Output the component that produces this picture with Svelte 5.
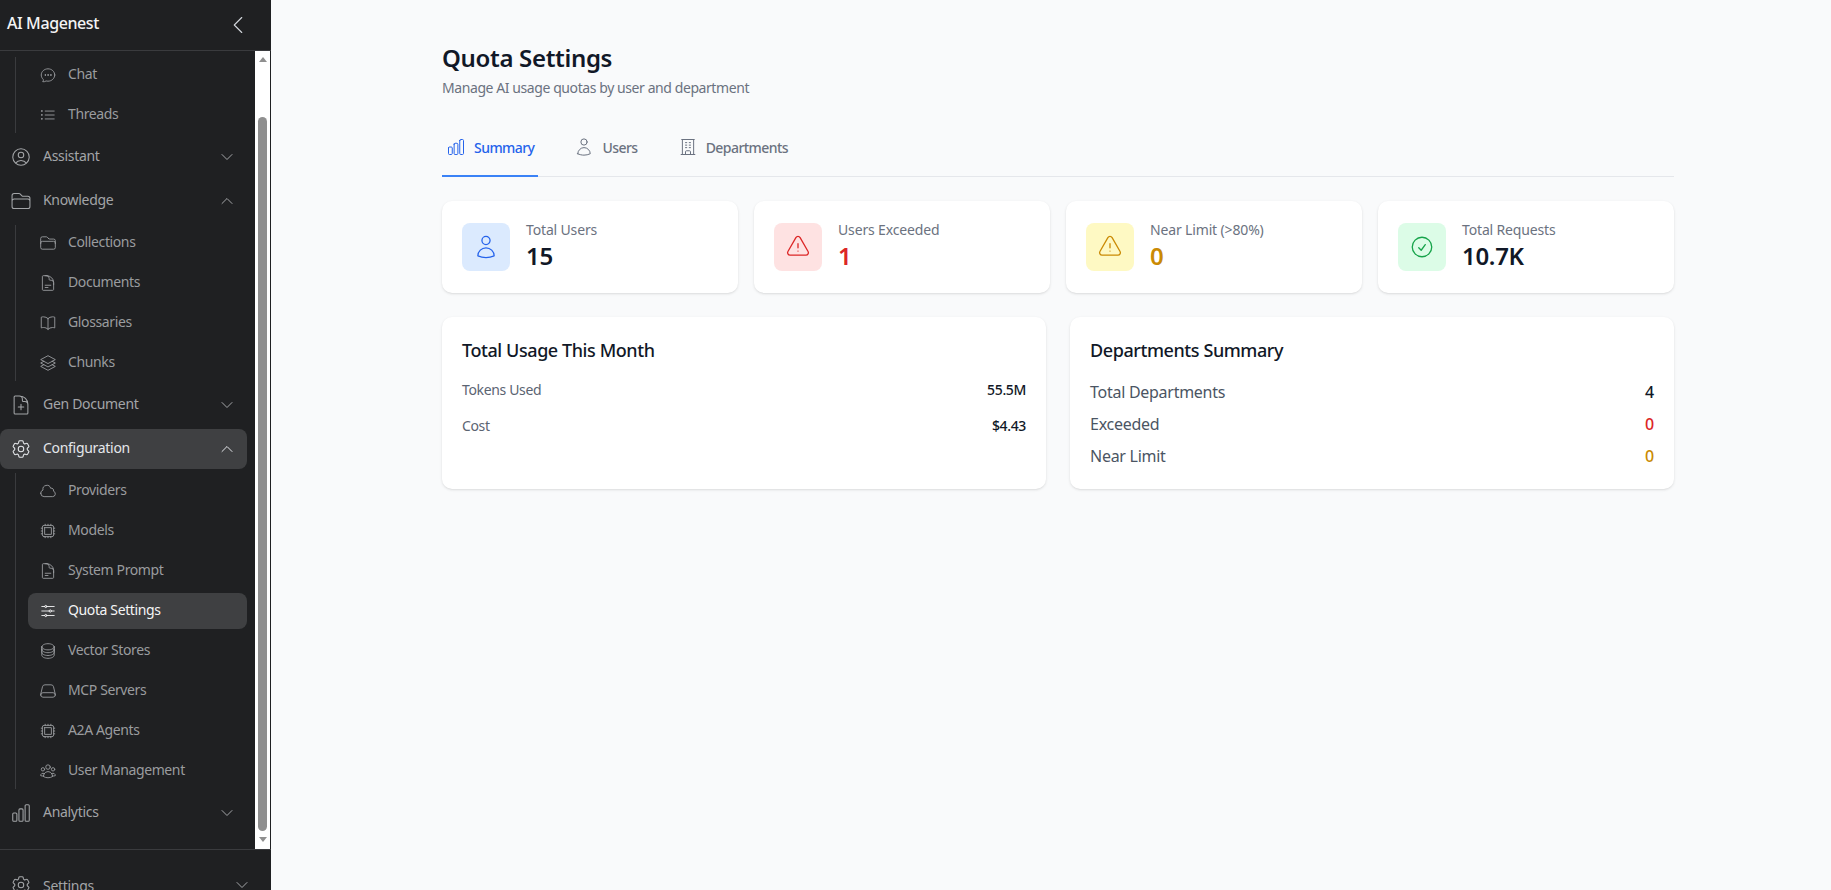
<script>
  const P = {
    chart: 'M3 13.125C3 12.504 3.504 12 4.125 12h2.25c.621 0 1.125.504 1.125 1.125v6.75C7.5 20.496 6.996 21 6.375 21h-2.25A1.125 1.125 0 0 1 3 19.875v-6.75ZM9.75 8.625c0-.621.504-1.125 1.125-1.125h2.25c.621 0 1.125.504 1.125 1.125v11.25c0 .621-.504 1.125-1.125 1.125h-2.25a1.125 1.125 0 0 1-1.125-1.125V8.625ZM16.5 4.125c0-.621.504-1.125 1.125-1.125h2.25C20.496 3 21 3.504 21 4.125v15.75c0 .621-.504 1.125-1.125 1.125h-2.25a1.125 1.125 0 0 1-1.125-1.125V4.125Z',
    user: 'M15.75 6a3.75 3.75 0 1 1-7.5 0 3.75 3.75 0 0 1 7.5 0ZM4.501 20.118a7.5 7.5 0 0 1 14.998 0A17.933 17.933 0 0 1 12 21.75c-2.676 0-5.216-.584-7.499-1.632Z',
    warn: 'M12 9v3.75m-9.303 3.376c-.866 1.5.217 3.374 1.948 3.374h14.71c1.73 0 2.813-1.874 1.948-3.374L13.949 3.378c-.866-1.5-3.032-1.5-3.898 0L2.697 16.126ZM12 15.75h.007v.008H12v-.008Z',
    check: 'M9 12.75 11.25 15 15 9.75M21 12a9 9 0 1 1-18 0 9 9 0 0 1 18 0Z',
    office: 'M3.75 21h16.5M4.5 3h15M5.25 3v18m13.5-18v18M9 6.75h1.5m-1.5 3h1.5m-1.5 3h1.5m3-6H15m-1.5 3H15m-1.5 3H15M9 21v-3.375c0-.621.504-1.125 1.125-1.125h3.75c.621 0 1.125.504 1.125 1.125V21',
    chat: 'M8.625 12a.375.375 0 1 1-.75 0 .375.375 0 0 1 .75 0Zm0 0H8.25m4.125 0a.375.375 0 1 1-.75 0 .375.375 0 0 1 .75 0Zm0 0H12m4.125 0a.375.375 0 1 1-.75 0 .375.375 0 0 1 .75 0Zm0 0h-.375M21 12c0 4.556-4.03 8.25-9 8.25a9.764 9.764 0 0 1-2.555-.337A5.972 5.972 0 0 1 5.41 20.97a5.969 5.969 0 0 1-.474-.065 4.48 4.48 0 0 0 .978-2.025c.09-.457-.133-.901-.467-1.226C3.93 16.178 3 14.189 3 12c0-4.556 4.03-8.25 9-8.25s9 3.694 9 8.25Z',
    list: 'M8.25 6.75h12M8.25 12h12m-12 5.25h12M3.75 6.75h.007v.008H3.75V6.75Zm.375 0a.375.375 0 1 1-.75 0 .375.375 0 0 1 .75 0ZM3.75 12h.007v.008H3.75V12Zm.375 0a.375.375 0 1 1-.75 0 .375.375 0 0 1 .75 0Zm-.375 5.25h.007v.008H3.75v-.008Zm.375 0a.375.375 0 1 1-.75 0 .375.375 0 0 1 .75 0Z',
    ucircle: 'M17.982 18.725A7.488 7.488 0 0 0 12 15.75a7.488 7.488 0 0 0-5.982 2.975m11.963 0a9 9 0 1 0-11.963 0m11.963 0A8.966 8.966 0 0 1 12 21a8.966 8.966 0 0 1-5.982-2.275M15 9.75a3 3 0 1 1-6 0 3 3 0 0 1 6 0Z',
    folder: 'M2.25 12.75V12A2.25 2.25 0 0 1 4.5 9.75h15A2.25 2.25 0 0 1 21.75 12v.75m-8.69-6.44-2.12-2.12a1.5 1.5 0 0 0-1.061-.44H4.5A2.25 2.25 0 0 0 2.25 6v12a2.25 2.25 0 0 0 2.25 2.25h15A2.25 2.25 0 0 0 21.75 18V9a2.25 2.25 0 0 0-2.25-2.25h-5.379a1.5 1.5 0 0 1-1.06-.44Z',
    doc: 'M19.5 14.25v-2.625a3.375 3.375 0 0 0-3.375-3.375h-1.5A1.125 1.125 0 0 1 13.5 7.125v-1.5a3.375 3.375 0 0 0-3.375-3.375H8.25m0 12.75h7.5m-7.5 3H12M10.5 2.25H5.625c-.621 0-1.125.504-1.125 1.125v17.25c0 .621.504 1.125 1.125 1.125h12.75c.621 0 1.125-.504 1.125-1.125V11.25a9 9 0 0 0-9-9Z',
    docplus: 'M19.5 14.25v-2.625a3.375 3.375 0 0 0-3.375-3.375h-1.5A1.125 1.125 0 0 1 13.5 7.125v-1.5a3.375 3.375 0 0 0-3.375-3.375H8.25m3.75 9v6m3-3H9m1.5-12H5.625c-.621 0-1.125.504-1.125 1.125v17.25c0 .621.504 1.125 1.125 1.125h12.75c.621 0 1.125-.504 1.125-1.125V11.25a9 9 0 0 0-9-9Z',
    book: 'M12 6.042A8.967 8.967 0 0 0 6 3.75c-1.052 0-2.062.18-3 .512v14.25A8.987 8.987 0 0 1 6 18c2.305 0 4.408.867 6 2.292m0-14.25a8.966 8.966 0 0 1 6-2.292c1.052 0 2.062.18 3 .512v14.25A8.987 8.987 0 0 0 18 18a8.967 8.967 0 0 0-6 2.292m0-14.25v14.25',
    stack: 'M6.429 9.75 2.25 12l4.179 2.25m0-4.5 5.571 3 5.571-3m-11.142 0L2.25 7.5 12 2.25l9.75 5.25-4.179 2.25m0 0L21.75 12l-4.179 2.25m0 0 4.179 2.25L12 21.75 2.25 16.5l4.179-2.25m11.142 0-5.571 3-5.571-3',
    cog: 'M9.594 3.94c.09-.542.56-.94 1.11-.94h2.593c.55 0 1.02.398 1.11.94l.213 1.281c.063.374.313.686.645.87.074.04.147.083.22.127.325.196.72.257 1.075.124l1.217-.456a1.125 1.125 0 0 1 1.37.49l1.296 2.247a1.125 1.125 0 0 1-.26 1.431l-1.003.827c-.293.241-.438.613-.43.992a7.723 7.723 0 0 1 0 .255c-.008.378.137.75.43.991l1.004.827c.424.35.534.955.26 1.43l-1.298 2.247a1.125 1.125 0 0 1-1.369.491l-1.217-.456c-.355-.133-.75-.072-1.076.124a6.47 6.47 0 0 1-.22.128c-.331.183-.581.495-.644.869l-.213 1.281c-.09.543-.56.94-1.11.94h-2.594c-.55 0-1.019-.398-1.11-.94l-.213-1.281c-.062-.374-.312-.686-.644-.87a6.52 6.52 0 0 1-.22-.127c-.325-.196-.72-.257-1.076-.124l-1.217.456a1.125 1.125 0 0 1-1.369-.49l-1.297-2.247a1.125 1.125 0 0 1 .26-1.431l1.004-.827c.292-.24.437-.613.43-.991a6.932 6.932 0 0 1 0-.255c.007-.38-.138-.751-.43-.992l-1.004-.827a1.125 1.125 0 0 1-.26-1.43l1.297-2.247a1.125 1.125 0 0 1 1.37-.491l1.216.456c.356.133.751.072 1.076-.124.072-.044.146-.086.22-.128.332-.183.582-.495.644-.869l.214-1.28Z M15 12a3 3 0 1 1-6 0 3 3 0 0 1 6 0Z',
    cloud: 'M2.25 15a4.5 4.5 0 0 0 4.5 4.5H18a3.75 3.75 0 0 0 1.332-7.257 3 3 0 0 0-3.758-3.848 5.25 5.25 0 0 0-10.233 2.33A4.502 4.502 0 0 0 2.25 15Z',
    cpu: 'M8.25 3v1.5M4.5 8.25H3m18 0h-1.5M4.5 12H3m18 0h-1.5m-15 3.75H3m18 0h-1.5M8.25 19.5V21M12 3v1.5m0 15V21m3.75-18v1.5m0 15V21m-9-1.5h10.5a2.25 2.25 0 0 0 2.25-2.25V6.75a2.25 2.25 0 0 0-2.25-2.25H6.75A2.25 2.25 0 0 0 4.5 6.75v10.5a2.25 2.25 0 0 0 2.25 2.25Zm.75-12h9v9h-9v-9Z',
    sliders: 'M10.5 6h9.75M10.5 6a1.5 1.5 0 1 1-3 0m3 0a1.5 1.5 0 1 0-3 0M3.75 6H7.5m3 12h9.75m-9.75 0a1.5 1.5 0 0 1-3 0m3 0a1.5 1.5 0 0 0-3 0m-3.75 0H7.5m9-6h3.75m-3.75 0a1.5 1.5 0 0 1-3 0m3 0a1.5 1.5 0 0 0-3 0m-9.75 0h9.75',
    db: 'M20.25 6.375c0 2.278-3.694 4.125-8.25 4.125S3.75 8.653 3.75 6.375m16.5 0c0-2.278-3.694-4.125-8.25-4.125S3.75 4.097 3.75 6.375m16.5 0v11.25c0 2.278-3.694 4.125-8.25 4.125s-8.25-1.847-8.25-4.125V6.375m16.5 0v3.75m-16.5-3.75v3.75m16.5 0v3.75C20.25 16.153 16.556 18 12 18s-8.25-1.847-8.25-4.125v-3.75m16.5 0c0 2.278-3.694 4.125-8.25 4.125s-8.25-1.847-8.25-4.125',
    server: 'M21.75 17.25v-.228a4.5 4.5 0 0 0-.12-1.03l-2.268-9.64a3.375 3.375 0 0 0-3.285-2.602H7.923a3.375 3.375 0 0 0-3.285 2.602l-2.268 9.64a4.5 4.5 0 0 0-.12 1.03v.228m19.5 0a3 3 0 0 1-3 3H5.25a3 3 0 0 1-3-3m19.5 0a3 3 0 0 0-3-3H5.25a3 3 0 0 0-3 3',
    group: 'M18 18.72a9.094 9.094 0 0 0 3.741-.479 3 3 0 0 0-4.682-2.72m.94 3.198.001.031c0 .225-.012.447-.037.666A11.944 11.944 0 0 1 12 21c-2.17 0-4.207-.576-5.963-1.584A6.062 6.062 0 0 1 6 18.719m12 0a5.971 5.971 0 0 0-.941-3.197m0 0A5.995 5.995 0 0 0 12 12.75a5.995 5.995 0 0 0-5.058 2.772m0 0a3 3 0 0 0-4.681 2.72 8.986 8.986 0 0 0 3.74.477m.94-3.197a5.971 5.971 0 0 0-.94 3.197M15 6.75a3 3 0 1 1-6 0 3 3 0 0 1 6 0Zm6 3a2.25 2.25 0 1 1-4.5 0 2.25 2.25 0 0 1 4.5 0Zm-13.5 0a2.25 2.25 0 1 1-4.5 0 2.25 2.25 0 0 1 4.5 0Z',
    down: 'm19.5 8.25-7.5 7.5-7.5-7.5',
    up: 'm4.5 15.75 7.5-7.5 7.5 7.5',
    left: 'M15.75 19.5 8.25 12l7.5-7.5'
  };
  const nav = [
    { sub: [['chat','Chat'],['list','Threads']] },
    { icon:'ucircle', label:'Assistant' },
    { icon:'folder', label:'Knowledge', open:true },
    { sub: [['folder','Collections'],['doc','Documents'],['book','Glossaries'],['stack','Chunks']] },
    { icon:'docplus', label:'Gen Document' },
    { icon:'cog', label:'Configuration', open:true, active:true },
    { sub: [['cloud','Providers'],['cpu','Models'],['doc','System Prompt'],['sliders','Quota Settings',true],['db','Vector Stores'],['server','MCP Servers'],['cpu','A2A Agents'],['group','User Management']] },
    { icon:'chart', label:'Analytics' }
  ];
  const tabs = [['chart','Summary',true],['user','Users'],['office','Departments']];
  const stats = [
    { icon:'user', tone:'blue', label:'Total Users', value:'15' },
    { icon:'warn', tone:'red', label:'Users Exceeded', value:'1' },
    { icon:'warn', tone:'amber', label:'Near Limit (>80%)', value:'0' },
    { icon:'check', tone:'green', label:'Total Requests', value:'10.7K' }
  ];
</script>

{#snippet icon(name, cls)}
  <svg class={cls} viewBox="0 0 24 24" fill="none" stroke="currentColor" stroke-linecap="round" stroke-linejoin="round"><path d={P[name]} /></svg>
{/snippet}

<div class="page">
  <aside class="sidebar">
    <header class="brand">
      <span class="brand-name">AI Magenest</span>
      {@render icon('left', 'ic-collapse')}
    </header>
    <div class="scroller">
      <nav class="nav">
        {#each nav as item}
          {#if item.sub}
            <ul class="sub">
              {#each item.sub as s}
                <li class="sub-item" class:current={s[2]}>
                  {@render icon(s[0], 'ic-sub')}
                  <span class="nav-text">{s[1]}</span>
                </li>
              {/each}
            </ul>
          {:else}
            <div class="top-item" class:active={item.active}>
              {@render icon(item.icon, 'ic-top')}
              <span class="grow nav-text">{item.label}</span>
              {@render icon(item.open ? 'up' : 'down', 'ic-chev')}
            </div>
          {/if}
        {/each}
      </nav>
      <div class="scrollbar">
        <i class="arrow-up"></i>
        <div class="track"><div class="thumb"></div></div>
        <i class="arrow-down"></i>
      </div>
    </div>
    <footer class="foot">
      <div class="top-item foot-item">
        {@render icon('cog', 'ic-top')}
        <span class="grow">Settings</span>
        {@render icon('down', 'ic-chev')}
      </div>
    </footer>
  </aside>

  <main class="main">
    <div class="wrap">
      <h1>Quota Settings</h1>
      <p class="lead">Manage AI usage quotas by user and department</p>

      <div class="tabs">
        {#each tabs as t}
          <div class="tab" class:on={t[2]}>
            {@render icon(t[0], 'ic-tab')}
            <span>{t[1]}</span>
          </div>
        {/each}
      </div>

      <section class="stats">
        {#each stats as s}
          <div class="card stat">
            <div class="badge {s.tone}">{@render icon(s.icon, 'ic-badge')}</div>
            <div class="stat-text">
              <div class="stat-label">{s.label}</div>
              <div class="stat-value tone-{s.tone}">{s.value}</div>
            </div>
          </div>
        {/each}
      </section>

      <section class="panels">
        <div class="card panel">
          <h2>Total Usage This Month</h2>
          <div class="rows small">
            <div class="row"><span>Tokens Used</span><b>55.5M</b></div>
            <div class="row"><span>Cost</span><b>$4.43</b></div>
          </div>
        </div>
        <div class="card panel">
          <h2>Departments Summary</h2>
          <div class="rows big">
            <div class="row"><span>Total Departments</span><b>4</b></div>
            <div class="row"><span>Exceeded</span><b class="tone-red">0</b></div>
            <div class="row"><span>Near Limit</span><b class="tone-amber">0</b></div>
          </div>
        </div>
      </section>
    </div>
  </main>
</div>

<style>
  :global(body) { margin: 0; background: #f9fafb; }
  .page { display: flex; height: 890px; overflow: hidden; font-family: "Noto Sans", "Open Sans", sans-serif; background: #f9fafb; }
  svg { display: block; flex: none; }

  .sidebar { width: 271px; flex: none; display: flex; flex-direction: column; background: #1f2022; color: #a3a5a8; height: 890px; }
  .brand { flex: none; display: flex; align-items: center; justify-content: space-between; padding: 0 21px 5px 7px; height: 45px; border-bottom: 1px solid #3a3b3e; }
  .brand-name { color: #f4f4f5; font-size: 16px; font-weight: 500; letter-spacing: -0.4px; }
  .ic-collapse { width: 24px; height: 24px; stroke-width: 1.1; color: #d1d5db; margin-top: 5px; }

  .scroller { flex: none; height: 798px; display: flex; }
  .nav { width: 255px; padding: 6px 8px 0 0; box-sizing: border-box; display: flex; flex-direction: column; gap: 4px; overflow: hidden; }
  .top-item { height: 40px; flex: none; display: flex; align-items: center; gap: 11px; padding: 0 12px 0 10px; border-radius: 8px; font-size: 14px; letter-spacing: -0.3px; }
  .top-item.active { background: #3f4042; color: #e5e7eb; }
  .grow { flex: 1; }
  .nav-text { padding-bottom: 3px; }
  .ic-top { width: 22px; height: 22px; stroke-width: 1.15; }
  .ic-chev { width: 16px; height: 16px; stroke-width: 1.5; }
  .sub { list-style: none; margin: 0 0 0 15px; padding: 0 0 0 12px; border-left: 1px solid #3a3b3e; display: flex; flex-direction: column; gap: 4px; }
  .sub-item { height: 36px; display: flex; align-items: center; gap: 11px; padding-left: 11px; border-radius: 8px; font-size: 14px; color: #9a9c9f; letter-spacing: -0.38px; }
  .sub-item.current { background: #3f4042; color: #f4f4f5; }
  .ic-sub { width: 18px; height: 18px; stroke-width: 1.2; }

  .scrollbar { width: 15px; flex: none; background: #fff; display: flex; flex-direction: column; align-items: center; }
  .track { flex: 1; width: 100%; display: flex; flex-direction: column; align-items: center; padding: 55px 0 0; box-sizing: border-box; }
  .thumb { width: 9px; height: 714px; border-radius: 5px; background: #8f8f8f; }
  .arrow-up, .arrow-down { width: 0; height: 0; border-left: 4.5px solid transparent; border-right: 4.5px solid transparent; flex: none; }
  .arrow-up { border-bottom: 5px solid #8f8f8f; margin-top: 6px; }
  .arrow-down { border-top: 5px solid #8f8f8f; margin-bottom: 7px; }

  .foot { flex: none; border-top: 1px solid #3a3b3e; padding: 15px 8px 0 0; }
  .foot-item { padding-right: 13px; }

  .main { flex: 1; min-width: 0; }
  .wrap { width: 1232px; margin-left: 171px; padding-top: 42px; }
  h1 { margin: 0; font-size: 24px; line-height: 32px; font-weight: 600; color: #111827; letter-spacing: -0.33px; }
  .lead { margin: 4px 0 0; font-size: 14px; line-height: 20px; color: #6b7280; letter-spacing: -0.42px; }
  .tabs { margin-top: 24px; display: flex; gap: 32px; border-bottom: 1px solid #e5e7eb; height: 54px; }
  .tab { height: 55px; box-sizing: border-box; padding: 0 4px 3px 4px; display: flex; align-items: center; gap: 8px; font-size: 14px; font-weight: 500; color: #6b7280; border-bottom: 2px solid transparent; letter-spacing: -0.55px; }
  .tab.on { color: #2563eb; border-bottom-color: #3b82f6; }
  .ic-tab { width: 20px; height: 20px; stroke-width: 1.2; }

  .stats { margin-top: 24px; display: grid; grid-template-columns: repeat(4, 1fr); gap: 16px; }
  .card { background: #fff; border-radius: 10px; box-shadow: 0 1px 3px rgba(0,0,0,.1), 0 1px 2px -1px rgba(0,0,0,.1); }
  .stat { display: flex; align-items: center; gap: 16px; padding: 20px; height: 92px; box-sizing: border-box; }
  .stat-text { padding-bottom: 2px; }
  .badge { width: 48px; height: 48px; border-radius: 8px; display: flex; align-items: center; justify-content: center; }
  .ic-badge { width: 26px; height: 26px; stroke-width: 1.2; }
  .blue { background: #dbeafe; color: #2563eb; }
  .red { background: #fee2e2; color: #dc2626; }
  .amber { background: #fef9c3; color: #ca8a04; }
  .green { background: #dcfce7; color: #16a34a; }
  .stat-label { font-size: 14px; line-height: 20px; color: #6b7280; font-weight: 400; letter-spacing: -0.15px; }
  .stat-value { font-size: 24px; line-height: 32px; font-weight: 600; color: #111827; letter-spacing: -0.3px; }
  .tone-red { color: #dc2626 !important; }
  .tone-amber { color: #ca8a04 !important; }

  .panels { margin-top: 24px; display: grid; grid-template-columns: 1fr 1fr; gap: 24px; }
  .panel { height: 172px; box-sizing: border-box; padding: 20px; }
  h2 { margin: 0; font-size: 18px; line-height: 26px; font-weight: 500; color: #111827; letter-spacing: -0.42px; }
  .rows { margin-top: 17px; display: flex; flex-direction: column; }
  .row { display: flex; justify-content: space-between; align-items: center; }
  .small { gap: 16px; font-size: 14px; line-height: 20px; letter-spacing: -0.35px; }
  .small span { color: #5b6472; }
  .small b { font-weight: 500; color: #111827; }
  .big { gap: 8px; font-size: 16px; line-height: 24px; letter-spacing: -0.27px; }
  .big span { color: #4b5563; }
  .big b { font-weight: 500; color: #111827; }
</style>
